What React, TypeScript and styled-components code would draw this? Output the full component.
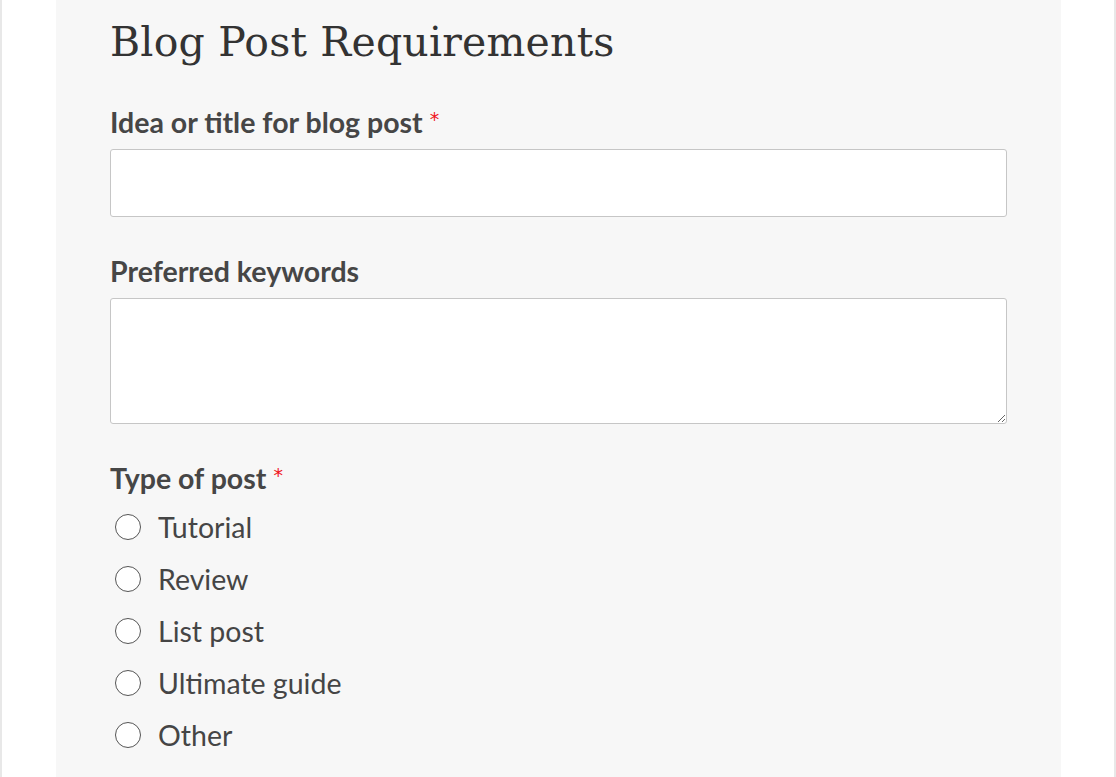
import React from 'react';
import styled, { createGlobalStyle } from 'styled-components';

const GlobalStyle = createGlobalStyle`
  html, body {
    margin: 0;
    padding: 0;
    background: #ffffff;
    overflow: hidden;
  }
  * { box-sizing: border-box; }
`;

const Page = styled.div`
  width: 1116px;
  height: 777px;
  border-left: 2px solid #e8e8e8;
  border-right: 2px solid #e8e8e8;
  padding-left: 54px;
  overflow: hidden;
`;

const Panel = styled.form`
  width: 1005px;
  min-height: 777px;
  background: #f7f7f7;
  padding: 14px 54px 0 54px;
`;

const Title = styled.h2`
  margin: 0 0 32px 0;
  font-family: "DejaVu Serif", "Liberation Serif", serif;
  font-weight: 400;
  font-size: 41px;
  line-height: 56px;
  color: #333333;
  letter-spacing: 0.2px;
`;

const Field = styled.div<{ $gap: number }>`
  margin-bottom: ${(p) => p.$gap}px;
`;

const Label = styled.label`
  display: block;
  font-family: Lato, "Open Sans", sans-serif;
  font-weight: 700;
  font-size: 28.5px;
  line-height: 34px;
  color: #464646;
  margin-bottom: 10px;
`;

const Required = styled.span`
  color: #f0141c;
  font-family: "DejaVu Sans", sans-serif;
  font-weight: 400;
  font-size: 19px;
  margin-left: 7px;
  vertical-align: 7px;
`;

const TextInput = styled.input`
  display: block;
  width: 897px;
  height: 68px;
  background: #ffffff;
  border: 1px solid #c6c6c6;
  border-radius: 3px;
  outline: none;
`;

const TextArea = styled.textarea`
  display: block;
  width: 897px;
  height: 126px;
  background: #ffffff;
  border: 1px solid #c6c6c6;
  border-radius: 3px;
  outline: none;
  resize: vertical;
`;

const Options = styled.div`
  display: flex;
  flex-direction: column;
  gap: 18px;
  margin-top: 15px;
`;

const Option = styled.label`
  display: flex;
  align-items: center;
  gap: 17px;
  padding-left: 5px;
  font-family: Lato, "Open Sans", sans-serif;
  font-size: 28.5px;
  line-height: 34px;
  color: #454545;
`;

const Radio = styled.span`
  display: inline-block;
  flex: none;
  width: 26px;
  height: 26px;
  border-radius: 50%;
  border: 1.5px solid #555555;
  background: #ffffff;
`;

const types = ['Tutorial', 'Review', 'List post', 'Ultimate guide', 'Other'];

export default function App() {
  return (
    <>
      <GlobalStyle />
      <Page>
        <Panel>
          <Title>Blog Post Requirements</Title>
          <Field $gap={37}>
            <Label>
              Idea or title for blog post<Required>*</Required>
            </Label>
            <TextInput type="text" />
          </Field>
          <Field $gap={34}>
            <Label>Preferred keywords</Label>
            <TextArea />
          </Field>
          <Field $gap={0}>
            <Label>
              Type of post<Required>*</Required>
            </Label>
            <Options>
              {types.map((t) => (
                <Option key={t}>
                  <Radio />
                  {t}
                </Option>
              ))}
            </Options>
          </Field>
        </Panel>
      </Page>
    </>
  );
}
